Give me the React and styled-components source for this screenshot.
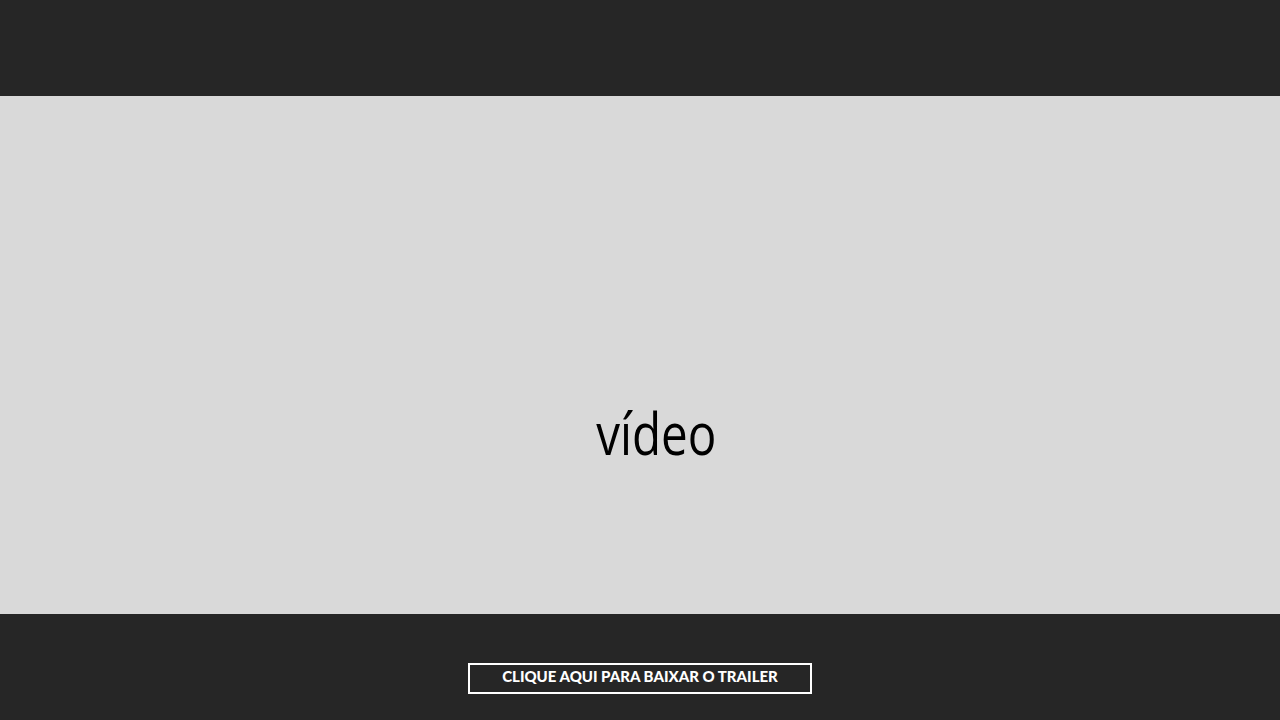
import React from "react";
import styled, { createGlobalStyle } from "styled-components";

const GlobalStyle = createGlobalStyle`
  html, body { margin: 0; padding: 0; background: #262626; }
  * { box-sizing: border-box; }
`;

const Page = styled.div`
  width: 1280px;
  height: 720px;
  display: flex;
  flex-direction: column;
  background: #262626;
  overflow: hidden;
`;

const Header = styled.header`
  height: 96px;
  flex-shrink: 0;
  background: #262626;
`;

const VideoArea = styled.section`
  height: 518px;
  flex-shrink: 0;
  background: #d9d9d9;
  display: flex;
  justify-content: center;
  align-items: flex-start;
  padding: 308px 0 0 32px;
`;

const VideoLabel = styled.span`
  display: inline-block;
  font-family: "Open Sans", sans-serif;
  font-weight: 400;
  font-size: 58px;
  line-height: 1;
  color: #000;
  transform: scaleX(0.82);
`;

const Footer = styled.footer`
  flex: 1;
  display: flex;
  justify-content: center;
  align-items: flex-start;
  padding-top: 49px;
`;

const TrailerButton = styled.a`
  width: 344px;
  height: 31px;
  border: 2px solid #fff;
  display: flex;
  justify-content: center;
  align-items: flex-start;
  padding-top: 4px;
  font-family: "Lato", sans-serif;
  font-weight: 900;
  font-size: 15px;
  line-height: 1;
  letter-spacing: 0;
  color: #fff;
  text-decoration: none;
  cursor: pointer;
`;

export default function App() {
  return (
    <>
      <GlobalStyle />
      <Page>
        <Header />
        <VideoArea>
          <VideoLabel>vídeo</VideoLabel>
        </VideoArea>
        <Footer>
          <TrailerButton>CLIQUE AQUI PARA BAIXAR O TRAILER</TrailerButton>
        </Footer>
      </Page>
    </>
  );
}
